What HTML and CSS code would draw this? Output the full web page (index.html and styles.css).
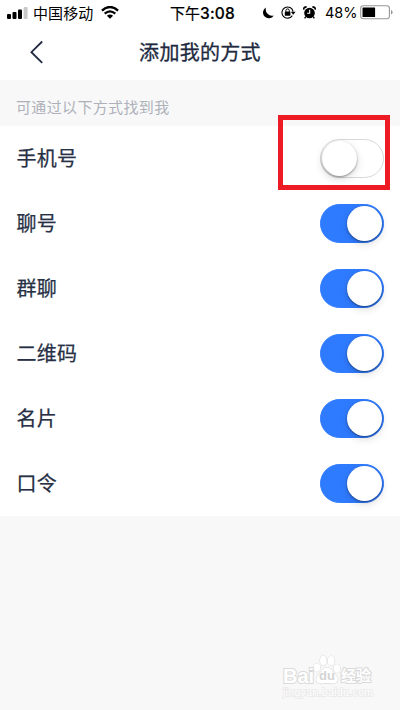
FILE: index.html
```html
<!DOCTYPE html>
<html lang="zh-CN">
<head>
<meta charset="utf-8">
<title>添加我的方式</title>
<link rel="stylesheet" href="styles.css">
</head>
<body>
<div class="status">
  <div class="status-left">
    <svg class="signal" width="21" height="12" viewBox="0 0 21 12"><rect x="0" y="7" width="4" height="5" rx="1"/><rect x="5.5" y="5" width="4" height="7" rx="1"/><rect x="11" y="2.5" width="4" height="9.5" rx="1"/><rect x="16.6" y="0" width="4" height="12" rx="1" fill="#c8c8c8"/></svg>
    <span class="carrier">中国移动</span>
    <svg class="wifi" width="18" height="13" viewBox="0 0 18 13"><g fill="none" stroke="#000" stroke-width="2.3"><path d="M.9 4.6Q9-2.6 17.1 4.6"/><path d="M3.700 7.700Q9 3.100 14.300 7.700"/></g><path d="M5.900 9.700Q9 7.100 12.100 9.700L9 12.800Z"/></svg>
  </div>
  <div class="clock">下午<span class="digits">3:08</span></div>
  <div class="status-right">
    <svg class="moon" width="12" height="12" viewBox="0 0 12 12"><path d="M4 .4A5.800 5.800 0 1 0 11.800 8.400 6.400 6.400 0 0 1 4 .4Z"/></svg>
    <svg class="lock" width="15" height="13" viewBox="0 0 15 13"><path d="M11.300 9.600A5.600 5.600 0 1 1 12.100 5.600" fill="none" stroke="#000" stroke-width="1.1"/><path d="M9.800 5.800h4.800L12.200 8.700Z"/><rect x="3.800" y="5.500" width="5.600" height="4.200" rx=".4"/><path d="M4.900 5.800V4.600a1.700 1.700 0 0 1 3.400 0v1.200" fill="none" stroke="#000"/></svg>
    <svg class="alarm" width="13" height="13" viewBox="0 0 13 13"><circle cx="6.5" cy="7" r="5.3"/><path d="M.8 3.600Q.5 1.200 3.600.9M12.200 3.600Q12.500 1.200 9.400.9" fill="none" stroke="#000" stroke-width="1.7"/><path d="M2.800 10.500 1.700 12.300M10.200 10.500l1.100 1.800" stroke="#000" stroke-width="1.4"/><path d="M6.700 3.800v3.500H4.100" fill="none" stroke="#fff" stroke-width="1.1"/></svg>
    <span class="percent">48%</span>
    <svg class="battery" width="33" height="15" viewBox="0 0 33 15"><rect x=".7" y=".7" width="28.700" height="13" rx="2.5" fill="none" stroke="#999" stroke-width="1.1"/><rect x="2.500" y="2.400" width="12.600" height="9.600" rx=".5"/><path d="M31 5v4.400q1.600-.4 1.600-2.200T31 5Z" fill="#999"/></svg>
  </div>
</div>
<header class="nav">
  <svg class="back" width="14" height="24" viewBox="0 0 14 24"><path d="M12.200 1.500 1.400 12.200 12.200 22.800" fill="none" stroke="#202940" stroke-width="1.800"/></svg>
  <h1>添加我的方式</h1>
</header>
<p class="hint">可通过以下方式找到我</p>
<main class="list">
  <div class="row"><span>手机号</span><i class="switch"></i></div>
  <div class="row"><span>聊号</span><i class="switch on"></i></div>
  <div class="row"><span>群聊</span><i class="switch on"></i></div>
  <div class="row"><span>二维码</span><i class="switch on"></i></div>
  <div class="row"><span>名片</span><i class="switch on"></i></div>
  <div class="row"><span>口令</span><i class="switch on"></i></div>
</main>
<div class="highlight"></div>
<div class="watermark">
  <div class="brand"><span class="bai">Bai</span><span class="paw"><svg width="28" height="30" viewBox="0 0 28 30"><g fill="#fff" stroke="#dadada" stroke-width="1.1"><ellipse cx="4" cy="12.500" rx="3.200" ry="4.200"/><ellipse cx="10.300" cy="5.500" rx="3.300" ry="4.700"/><ellipse cx="18" cy="5.700" rx="3.300" ry="4.700"/><ellipse cx="24" cy="13.500" rx="3.200" ry="4.200"/><path d="M14 12.500c4 0 5 4 8 6.700 3 2.500 4.500 8.500-1 9.300-3 .4-4-.4-7-.4s-4 .8-7 .4c-5.500-.8-4-6.800-1-9.300 3-2.700 4-6.700 8-6.700Z"/></g></svg><b>du</b></span><span class="jy">经验</span></div>
  <div class="site">jingyan.baidu.com</div>
</div>
</body>
</html>
```
FILE: styles.css
```css
* { box-sizing: border-box; }
body {
  margin: 0;
  width: 400px;
  height: 710px;
  overflow: hidden;
  position: relative;
  background: #f8f8f8;
  color: #273044;
  font-family: "Noto Sans CJK SC", sans-serif;
}
svg { display: block; flex: none; }
.status {
  display: grid;
  grid-template-columns: 170px 66px 164px;
  height: 26px;
  background: #fff;
  color: #000;
  font-size: 15px;
  line-height: 25px;
  white-space: nowrap;
}
.status-left, .status-right {
  display: flex;
  align-items: center;
  height: 25px;
}
.status-left { padding-left: 7px; }
.signal { margin-top: 1px; }
.carrier { margin-left: 5px; letter-spacing: .1px; }
.wifi { margin-left: 8px; }
.clock { -webkit-text-stroke: .2px #000; }
.digits {
  font-family: Inter, sans-serif;
  font-weight: 500;
  font-size: 15.500px;
  letter-spacing: .2px;
}
.status-right { padding-left: 26px; }
.lock { margin-left: 7px; }
.alarm { margin-left: 7px; }
.percent {
  margin-left: 9px;
  width: 34px;
  font-family: Inter, sans-serif;
  font-size: 14.500px;
}
.battery { margin-left: 1px; }
.nav {
  height: 54px;
  display: grid;
  grid-template-columns: 30px 1fr 30px;
  align-items: center;
  background: #fff;
  color: #202940;
}
.back { margin: 0 0 2px 30px; }
.nav h1 {
  margin: 0;
  text-align: center;
  font-size: 20px;
  font-weight: 400;
  letter-spacing: .3px;
  line-height: 52px;
  height: 54px;
  -webkit-text-stroke: .3px #202940;
}
.hint {
  margin: 0;
  height: 46px;
  padding: 4px 0 0 16px;
  line-height: 46px;
  font-size: 15px;
  letter-spacing: .35px;
  color: #aeb1ba;
}
.list { background: #fff; }
.row {
  height: 65px;
  padding: 0 16px 0 16.500px;
  display: flex;
  align-items: center;
  justify-content: space-between;
  font-size: 20px;
  line-height: 30px;
  letter-spacing: .2px;
  -webkit-text-stroke: .25px #273044;
}
.row span { margin-bottom: 1px; }
.switch {
  width: 64px;
  height: 39px;
  padding: 0 1px;
  display: flex;
  align-items: center;
  border: 1px solid #d8d8d8;
  border-radius: 20px;
}
.switch::before {
  content: "";
  width: 35px;
  height: 35px;
  border-radius: 50%;
  background: #fff;
  box-shadow: 0 1px 2px rgba(0, 0, 0, .4), 0 3px 9px rgba(0, 0, 0, .15);
}
.switch.on {
  justify-content: flex-end;
  background: #2f7bff;
  border-color: #2f7bff;
}
.highlight {
  position: absolute;
  left: 278px;
  top: 115px;
  width: 112px;
  height: 75px;
  border: 5px solid #ed1c24;
}
.watermark {
  position: absolute;
  left: 283px;
  top: 655px;
  width: 92px;
  color: #fff;
  font-family: "Liberation Sans", sans-serif;
}
.brand {
  display: flex;
  align-items: flex-end;
  height: 30px;
  font-size: 20px;
  font-weight: 700;
  line-height: 20px;
  paint-order: stroke fill;
  -webkit-text-stroke: 2px #dadada;
}
.bai { width: 30px; margin-bottom: -1px; }
.paw { position: relative; }
.paw b {
  position: absolute;
  left: 6px;
  bottom: 0;
  font-size: 13px;
  line-height: 18px;
  color: #d4d4d4;
  -webkit-text-stroke: 0;
}
.jy {
  font: 700 15px/20px "Noto Sans CJK SC", sans-serif;
  color: #fff;
}
.site {
  margin-top: 1px;
  font-size: 11px;
  line-height: 13px;
  letter-spacing: .1px;
  paint-order: stroke fill;
  -webkit-text-stroke: 1.500px #e8e8e8;
}
```
